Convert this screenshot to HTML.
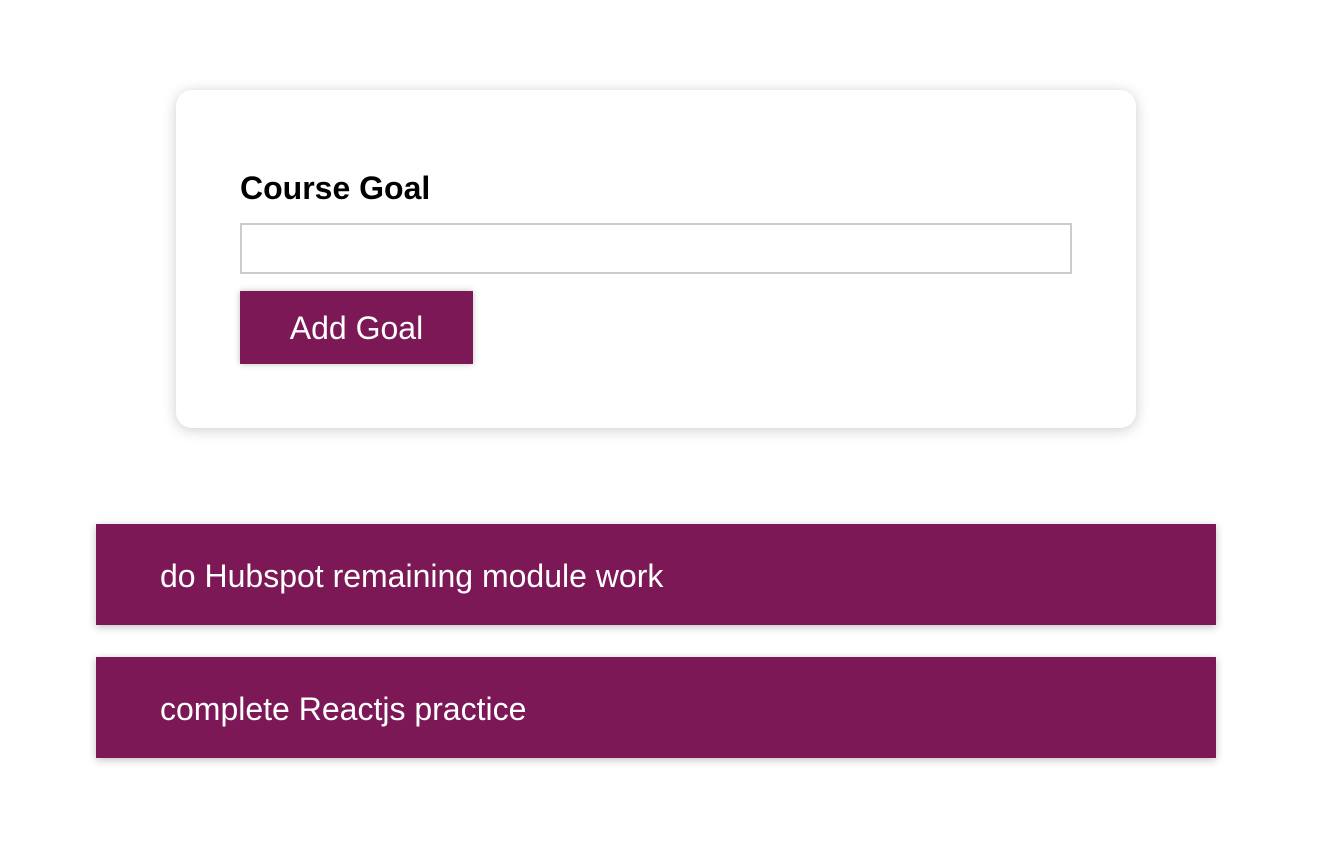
<!DOCTYPE html>
<html><head><style>
html,body{margin:0;padding:0;background:#fff;width:1322px;height:850px;overflow:hidden;font-family:"Liberation Sans",Arial,sans-serif}
.card{position:absolute;left:176px;top:90px;width:960px;height:338px;background:#fff;border-radius:16px;box-shadow:0 2px 14px rgba(0,0,0,0.2)}
.label{position:absolute;left:240px;top:170px;font-weight:bold;font-size:32px;color:#000}
.input{position:absolute;left:240px;top:223px;width:828px;height:47px;border:2px solid #ccc;background:#fff}
.btn{position:absolute;left:240px;top:291px;width:233px;height:73px;background:#7d1857;color:#fff;font-size:32px;display:flex;align-items:center;justify-content:center;box-shadow:0 0 6px rgba(0,0,0,0.25);padding-top:2px;box-sizing:border-box}
.item{position:absolute;left:96px;width:1120px;height:101px;background:#7d1857;color:#fff;font-size:32px;box-shadow:0 2px 8px rgba(0,0,0,0.26);display:flex;align-items:center;box-sizing:border-box;padding-left:64px;padding-top:3px}
</style></head><body>
<div class="card"></div>
<div class="label">Course Goal</div>
<div class="input"></div>
<div class="btn">Add Goal</div>
<div class="item" style="top:524px">do Hubspot remaining module work</div>
<div class="item" style="top:657px">complete Reactjs practice</div>
</body></html>
